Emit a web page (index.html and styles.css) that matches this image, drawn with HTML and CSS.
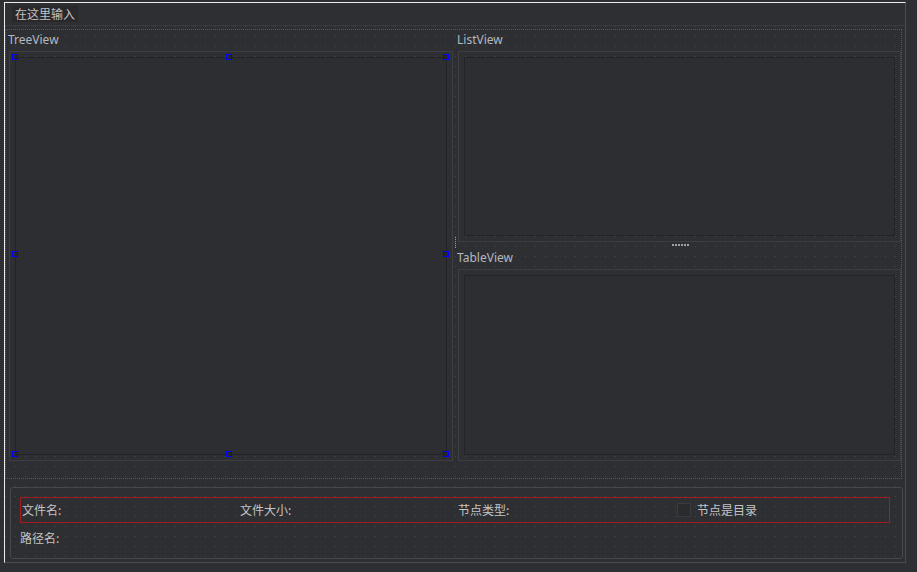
FILE: index.html
```html
<!DOCTYPE html>
<html lang="zh">
<head>
<meta charset="utf-8">
<title>Designer Form</title>
<link rel="stylesheet" href="styles.css">
</head>
<body>
<div class="form">
  <div class="menubar"><span class="typehere">在这里输入</span></div>
  <div class="central">
    <div class="splitter">
      <div class="pane pane-left">
        <div class="caption">TreeView</div>
        <div class="frame frame-tree">
          <div class="view tree">
            <span class="handle h-tl"></span>
            <span class="handle h-tc"></span>
            <span class="handle h-tr"></span>
            <span class="handle h-ml"></span>
            <span class="handle h-mr"></span>
            <span class="handle h-bl"></span>
            <span class="handle h-bc"></span>
            <span class="handle h-br"></span>
          </div>
        </div>
      </div>
      <div class="hsplit"><span class="grip-v"></span></div>
      <div class="pane pane-right">
        <div class="sub sub-list">
          <div class="caption">ListView</div>
          <div class="frame frame-list"><div class="view"></div></div>
        </div>
        <div class="vsplit"><span class="grip-h"></span></div>
        <div class="sub sub-table">
          <div class="caption">TableView</div>
          <div class="frame frame-table"><div class="view"></div></div>
        </div>
      </div>
    </div>
    <div class="group">
      <div class="layout-row">
        <div class="cell">文件名:</div>
        <div class="cell">文件大小:</div>
        <div class="cell">节点类型:</div>
        <div class="cell check"><span class="box"></span><span>节点是目录</span></div>
      </div>
      <div class="path-row">路径名:</div>
    </div>
  </div>
</div>
</body>
</html>
```
FILE: styles.css
```css
html, body {
  margin: 0;
  padding: 0;
}
body {
  width: 917px;
  height: 572px;
  overflow: hidden;
  background: #2e2f32;
  font-family: "Noto Sans", "Noto Sans CJK SC", sans-serif;
  font-size: 12px;
  color: #c3c6ca;
}
.form {
  box-sizing: border-box;
  margin: 2px 0 0 4px;
  width: 902px;
  height: 561px;
  border-top: 1px solid #ececec;
  border-left: 1px solid #ececec;
  border-right: 1px solid #4a4b4e;
  border-bottom: 1px solid #4a4b4e;
  background: #2e2f32;
  display: flex;
  flex-direction: column;
}
.menubar {
  height: 22px;
  border-bottom: 1px solid #3b3c3f;
  box-sizing: content-box;
  display: flex;
  align-items: flex-start;
}
.typehere {
  margin: 3px 0 0 7px;
  padding: 0 3px;
  height: 16px;
  line-height: 16px;
  background: #29292b;
  font-family: "Noto Sans CJK SC", sans-serif;
  color: #c2c2c2;
}
.central {
  flex: 1;
  display: flex;
  flex-direction: column;
  background-color: #2e2f32;
  background-image: conic-gradient(at 1px 1px, transparent 270deg, #45474b 270deg);
  background-size: 10px 10px;
  background-position: 0 0;
}
.splitter {
  box-sizing: border-box;
  margin-top: 3px;
  width: 897px;
  height: 450px;
  border: 1px dotted #55575b;
  display: flex;
  align-items: flex-start;
}
.pane-left {
  width: 447px;
}
.caption {
  height: 16px;
  line-height: 16px;
  padding: 2px 0 3px 2px;
  color: #b3b9c0;
}
.frame {
  box-sizing: border-box;
  border: 1px solid #3d3e41;
  padding: 5px;
}
.frame-tree {
  margin-left: 3px;
  width: 444px;
  height: 410px;
}
.view {
  box-sizing: border-box;
  width: 100%;
  height: 100%;
  border: 1px solid #232427;
  background: #2d2e31;
}
.tree {
  position: relative;
}
.handle {
  position: absolute;
  display: block;
  width: 6px;
  height: 6px;
  box-sizing: border-box;
  border: 1px solid #0000ff;
  background: #26272a;
  z-index: 2;
}
.h-tl { left: -4px; top: -4px; }
.h-tc { left: calc(50% - 5px); top: -4px; }
.h-tr { right: -3px; top: -4px; }
.h-ml { left: -4px; top: calc(50% - 5px); }
.h-mr { right: -3px; top: calc(50% - 5px); }
.h-bl { left: -4px; bottom: -3px; }
.h-bc { left: calc(50% - 5px); bottom: -3px; }
.h-br { right: -3px; bottom: -3px; }
.hsplit {
  width: 3px;
  height: 431px;
  display: flex;
  justify-content: flex-end;
  align-items: flex-start;
}
.grip-v {
  margin-top: 207px;
  width: 1px;
  height: 12px;
  background: repeating-linear-gradient(to bottom, #9a9a9a 0 1px, transparent 1px 2px);
}
.pane-right {
  width: 445px;
  display: flex;
  flex-direction: column;
}
.sub .caption {
  padding-left: 1px;
}
.sub .frame {
  margin-left: 2px;
  width: 443px;
}
.frame-list {
  height: 191px;
}
.frame-table {
  height: 192px;
}
.vsplit {
  height: 6px;
  display: flex;
  justify-content: center;
  align-items: flex-start;
}
.grip-h {
  margin-top: 2px;
  margin-left: 4px;
  width: 17px;
  height: 2px;
  background: repeating-linear-gradient(to right, #a0a0a0 0 2px, transparent 2px 3px);
}
.group {
  box-sizing: border-box;
  margin: 8px 0 0 5px;
  width: 893px;
  height: 72px;
  border: 1px solid #47484b;
  border-radius: 3px;
  padding: 9px 0 0 9px;
  font-family: "Noto Sans CJK SC", sans-serif;
  color: #c4c4c4;
}
.layout-row {
  box-sizing: border-box;
  width: 870px;
  height: 26px;
  border: 1px solid #a31c1e;
  padding-left: 1px;
  display: grid;
  grid-template-columns: 218px 218px 219px 1fr;
  align-items: center;
}
.cell {
  line-height: 16px;
}
.check {
  display: flex;
  align-items: center;
  gap: 6px;
}
.box {
  box-sizing: border-box;
  width: 14px;
  height: 14px;
  border: 1px solid #3a3b3e;
  background: #2a2b2d;
}
.path-row {
  margin-top: 7px;
  line-height: 16px;
}
```
